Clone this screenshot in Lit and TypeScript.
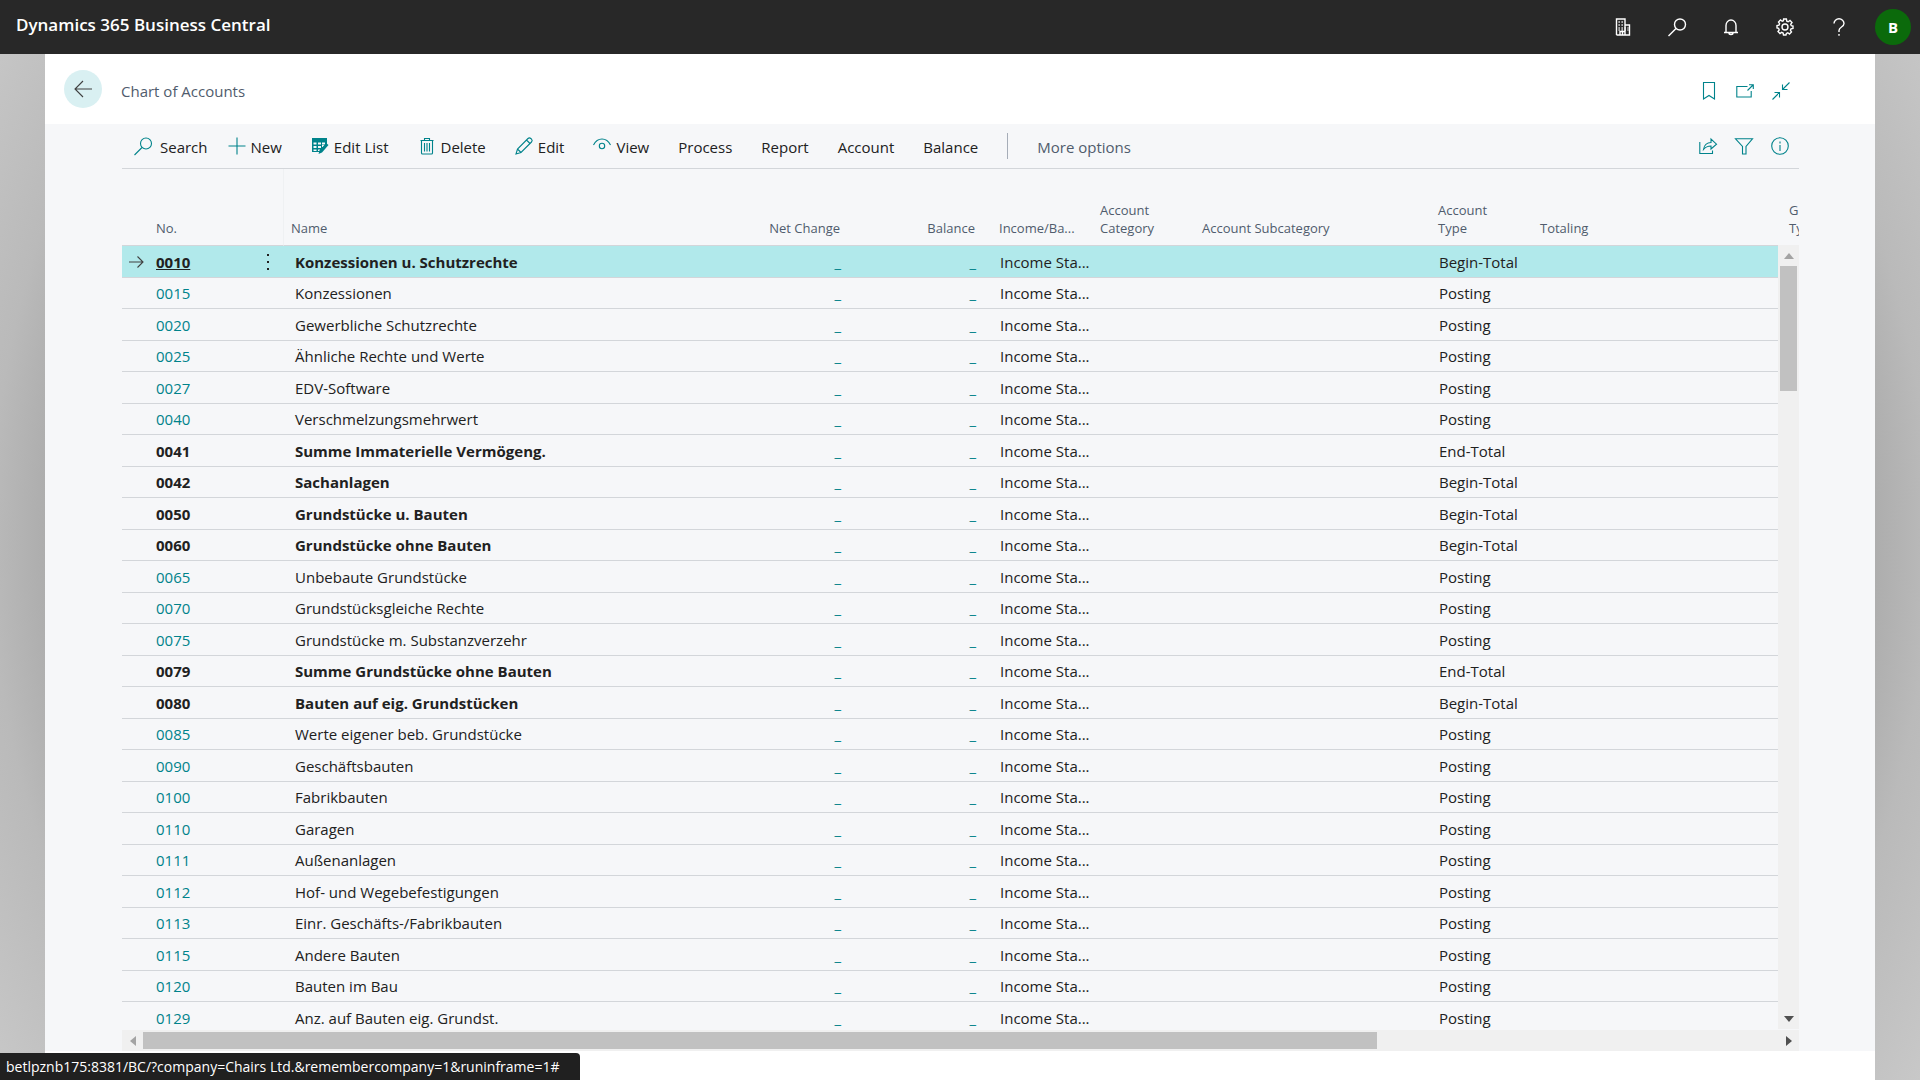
import { LitElement, html, css, svg, nothing } from "lit";
import { customElement } from "lit/decorators.js";
import { classMap } from "lit/directives/class-map.js";

type Row = [string, string, string];

const ROWS: Row[] = [
  ["0010", "Konzessionen u. Schutzrechte", "Begin-Total"],
  ["0015", "Konzessionen", "Posting"],
  ["0020", "Gewerbliche Schutzrechte", "Posting"],
  ["0025", "Ähnliche Rechte und Werte", "Posting"],
  ["0027", "EDV-Software", "Posting"],
  ["0040", "Verschmelzungsmehrwert", "Posting"],
  ["0041", "Summe Immaterielle Vermögeng.", "End-Total"],
  ["0042", "Sachanlagen", "Begin-Total"],
  ["0050", "Grundstücke u. Bauten", "Begin-Total"],
  ["0060", "Grundstücke ohne Bauten", "Begin-Total"],
  ["0065", "Unbebaute Grundstücke", "Posting"],
  ["0070", "Grundstücksgleiche Rechte", "Posting"],
  ["0075", "Grundstücke m. Substanzverzehr", "Posting"],
  ["0079", "Summe Grundstücke ohne Bauten", "End-Total"],
  ["0080", "Bauten auf eig. Grundstücken", "Begin-Total"],
  ["0085", "Werte eigener beb. Grundstücke", "Posting"],
  ["0090", "Geschäftsbauten", "Posting"],
  ["0100", "Fabrikbauten", "Posting"],
  ["0110", "Garagen", "Posting"],
  ["0111", "Außenanlagen", "Posting"],
  ["0112", "Hof- und Wegebefestigungen", "Posting"],
  ["0113", "Einr. Geschäfts-/Fabrikbauten", "Posting"],
  ["0115", "Andere Bauten", "Posting"],
  ["0120", "Bauten im Bau", "Posting"],
  ["0129", "Anz. auf Bauten eig. Grundst.", "Posting"],
];

const ICONS: Record<string, unknown> = {
  search: svg`<circle cx="12" cy="6.500" r="5.500"/><path d="M8 10.500L.5 18"/>`,
  plus: svg`<path d="M9 .5v17M.5 9h17"/>`,
  editList: svg`<path fill="currentColor" stroke="none" fill-rule="evenodd" d="M1 1h15v6l-2 2v-1h-3v2h2l-1 1h-1v2l-2 2H1zM2.500 5.500v2h3v-2zm4.500 0v2h3v-2zm4 0v2h3v-2zm-8.500 3.500v2h3V9zM7 9v2h3V9zm-4.500 3.500v1.500h3v-1.500zm4.500 0v1.500h2v-1.500z"/><path fill="currentColor" stroke="none" d="M15 6l2.500 2-6.500 7.500-3.500 1.500 1-3.500z"/>`,
  trash: svg`<path d="M2.500 3.500h13M6.500 3.500v-2h5v2M3.500 3.500v12.500a1 1 0 0 0 1 1h9a1 1 0 0 0 1-1V3.500M6.500 6v8.500M9 6v8.500M11.500 6v8.500"/>`,
  pencil: svg`<path d="M1 17l1.500-5L13 1.500a2 2 0 0 1 2.800 0l.7.700a2 2 0 0 1 0 2.800L6 15.500zM2.500 12L6 15.500M11.500 3l3.500 3.500"/>`,
  eye: svg`<path d="M.5 8C2.500 4 5.500 2 9 2S15.500 4 17.500 8"/><circle cx="9" cy="9" r="2.700"/>`,
  building: svg`<path d="M2.500 17V1h8.500v16M11 7h4.500v10H2.500M6 17v-3.500h5V17M8.500 14v3"/><path stroke-dasharray="1.300 1.700" d="M4.500 4h6M4.500 7h6M4.500 10h10M4.500 12h10"/>`,
  bell: svg`<path d="M2 14.500h14M4 14.500V7.500a5 5.500 0 0 1 10 0v7M7 15a2 1.500 0 0 0 4 0"/>`,
  gear: svg`<circle cx="9" cy="9" r="3"/><path d="M7.600 1h2.800l.4 2.200 1.400.6L14 2.500l2 2-1.300 1.800.6 1.400L17 8v2.500l-2 .4-.6 1.400L15.500 14l-2 2-1.700-1.200-1.400.6L10 17H7.500l-.4-2-1.500-.6L4 15.500l-2-2 1.200-1.700-.6-1.400L1 10V7.500l2-.4.6-1.400L2.500 4l2-2 1.700 1.200 1.200-.5z"/>`,
  help: svg`<path d="M4 5.500A5 4.700 0 0 1 14 5.500C14 9 9 9 9 12.500V14M9 16v1.800"/>`,
  back: svg`<path d="M18 9H1M9 1L1 9l8 8"/>`,
  row: svg`<path d="M2 9h14M10.500 3.500L16 9l-5.500 5.500"/>`,
  bookmark: svg`<path d="M3.500 .5h11v16.500L9 13.500 3.500 17z"/>`,
  popout: svg`<path d="M11.500 4.500H.8v10.500h14.400V9M11.500 8.500L17 3M13 2.700h4.300V7"/>`,
  collapse: svg`<path d="M17.500 .5L10.500 7.500M10.500 2.500v5h5M.5 17.500L7.500 10.500M2.500 10.500h5v5"/>`,
  share: svg`<path d="M.8 5v11.500h12.700V13.500M4.500 12.500C5 8.500 8 5.500 12 5.500V2L17.500 7.200 12 12V9C9 9 6.500 10 4.500 12.500z"/>`,
  filter: svg`<path d="M.5 1.800h17L11 9.500V17H7.500V9.500z"/>`,
  info: svg`<circle cx="9" cy="9" r="8.300"/><path d="M9 4.500v2M9 8v6"/>`,
};

const icon = (name: string) =>
  html`<svg class="icon" viewBox="0 0 18 18" aria-hidden="true">${ICONS[name]}</svg>`;

const ACTIONS: [string, string][] = [
  ["search", "Search"],
  ["plus", "New"],
  ["editList", "Edit List"],
  ["trash", "Delete"],
  ["pencil", "Edit"],
  ["eye", "View"],
];

const MENUS = ["Process", "Report", "Account", "Balance"];

@customElement("app-root")
export class AppRoot extends LitElement {
  static styles = css`
    :host {
      display: flex;
      flex-direction: column;
      height: 100vh;
      position: relative;
      overflow: hidden;
      font-family: "Open Sans", "Noto Sans", sans-serif;
      font-size: 15px;
      line-height: 20px;
      color: #212121;
      background: radial-gradient(circle farthest-corner, #adadad 83%, #bababa 88%, #c8c8c8 100%);
    }
    * { box-sizing: border-box; }
    button {
      font: inherit;
      color: inherit;
      background: none;
      border: 0;
      padding: 0;
      display: flex;
      align-items: center;
      white-space: nowrap;
    }
    a { color: inherit; text-decoration: none; }
    .icon {
      width: 18px;
      height: 18px;
      flex: none;
      fill: none;
      stroke: currentColor;
      stroke-width: 1.1;
      overflow: visible;
      display: block;
    }
    .topbar {
      flex: none;
      display: flex;
      align-items: center;
      justify-content: space-between;
      height: 54px;
      padding: 0 9px 0 16px;
      background: #282828;
      color: #fff;
    }
    .brand { font-size: 17px; font-weight: 600; padding-bottom: 4px; }
    .tools { display: flex; align-items: center; gap: 36px; }
    .tools .icon { stroke-width: 1.4; }
    .avatar {
      width: 36px;
      height: 36px;
      margin-left: -9px;
      border-radius: 50%;
      justify-content: center;
      background: #0b6a0b;
      font-size: 15px;
      font-weight: 700;
    }
    .panel {
      flex: 1;
      min-height: 0;
      margin: 0 45px;
      padding-bottom: 29px;
      background: #fff;
      display: flex;
      flex-direction: column;
    }
    .title {
      flex: none;
      display: flex;
      align-items: center;
      height: 70px;
      padding: 0 85px 0 19px;
    }
    .back {
      width: 38px;
      height: 38px;
      border-radius: 50%;
      background: #d9f0f2;
      color: #404040;
      justify-content: center;
    }
    h1 {
      margin: 0 auto 0 19px;
      padding-top: 4px;
      font-size: 15px;
      font-weight: 400;
      color: #505c6d;
    }
    .group { display: flex; gap: 18px; color: #00838b; }
    .title .group { padding-top: 3px; }
    .content {
      flex: 1;
      min-height: 0;
      display: flex;
      flex-direction: column;
      padding: 0 76px 0 77px;
      background: #f6f7f9;
    }
    .bar {
      flex: none;
      display: flex;
      align-items: center;
      height: 45px;
      padding: 0 10px 0 12px;
      border-bottom: 1px solid #d3d6da;
    }
    .actions { display: flex; gap: 29px; margin-right: auto; align-items: center; }
    .actions .icon { color: #00838b; }
    .action { gap: 5px; }
    .action.search { gap: 8px; margin-right: -9px; }
    .label { padding-top: 2px; }
    .sep { width: 1px; height: 26px; background: #a6adb8; }
    .more { color: #505c6d; }
    .list {
      flex: 1;
      min-height: 0;
      position: relative;
      overflow: hidden;
    }
    table {
      width: 100%;
      table-layout: fixed;
      border-collapse: separate;
      border-spacing: 0;
    }
    th, td { padding: 0; text-align: left; white-space: nowrap; overflow: hidden; }
    th {
      height: 77px;
      padding: 0 7px 8px;
      vertical-align: bottom;
      font-size: 13px;
      line-height: 18px;
      font-weight: 400;
      color: #505c6d;
      border-bottom: 1px solid #d3d6da;
    }
    .wrap { white-space: normal; }
    td {
      height: 31px;
      padding: 0 8px;
      line-height: 20px;
      border-bottom: 1px solid #d3d6da;
    }
    tr:nth-child(odd) td { height: 32px; }
    .mark { width: 27px; }
    .no { width: 102px; }
    .dots { width: 33px; }
    .name { width: 427px; }
    .net { width: 135px; }
    .bal { width: 135px; }
    .inc { width: 112px; }
    .cat { width: 102px; }
    .sub { width: 236px; }
    .type { width: 102px; }
    .rest { width: 17px; }
    th.net, th.bal { text-align: right; padding-right: 6px; }
    .rule { border-right: 1px solid #eff1f3; }
    td.no { padding-left: 7px; }
    td.mark { padding-left: 5px; color: #404040; }
    td.name { padding-left: 11px; }
    td.num { text-align: right; padding-right: 5px; color: #00838b; }
    td.no { color: #00838b; }
    th.inc { padding-left: 18px; padding-right: 0; }
    td.inc { padding-left: 19px; padding-right: 0; }
    .bold td.no, .bold td.name { color: #212121; font-weight: 700; }
    .current td { background: #b1e9eb; }
    .current td.no a { text-decoration: underline; }
    th.rest { padding-right: 0; }
    .kebab { width: 100%; height: 20px; justify-content: center; }
    .kebab .icon { fill: currentColor; stroke: none; }
    .vscroll {
      position: absolute;
      right: 0;
      top: 76px;
      bottom: 1px;
      width: 21px;
      padding: 0 2px;
      background: #f0f0f0;
      display: flex;
      flex-direction: column;
    }
    .hscroll {
      flex: none;
      height: 21px;
      padding: 2px 0;
      background: #f0f0f0;
      display: flex;
    }
    .cap { flex: none; width: 21px; display: flex; align-items: center; justify-content: center; }
    .vscroll .cap { width: auto; height: 21px; }
    .cap svg { width: 10px; height: 10px; fill: #505050; }
    .cap.off svg { fill: #a3a3a3; }
    .vthumb { height: 125px; background: #c1c1c1; margin-bottom: auto; }
    .track { flex: 1; }
    .hthumb { width: 75.500%; height: 100%; background: #c1c1c1; }
    .status {
      position: absolute;
      left: 0;
      bottom: 0;
      height: 27px;
      padding: 4px 20px 0 6px;
      border-radius: 0 4px 0 0;
      background: #202020;
      color: #fff;
      font-size: 14px;
      white-space: nowrap;
    }
  `;

  private row([no, name, type]: Row, i: number) {
    const bold = type !== "Posting";
    return html`<tr class=${classMap({ bold, current: i === 0 })}>
      <td class="mark">${i === 0 ? icon("row") : nothing}</td>
      <td class="no"><a href="#">${no}</a></td>
      <td class="dots">${i === 0
        ? html`<button class="kebab" aria-label="Row menu"><svg class="icon" viewBox="0 0 18 18"><path d="M8 1h2v2H8zM8 8h2v2H8zM8 15h2v2H8z"/></svg></button>`
        : nothing}</td>
      <td class="name">${name}</td>
      <td class="num"><a href="#">_</a></td>
      <td class="num"><a href="#">_</a></td>
      <td class="inc">Income Sta...</td>
      <td></td>
      <td></td>
      <td>${type}</td>
      <td></td>
      <td></td>
    </tr>`;
  }

  render() {
    return html`
      <header class="topbar">
        <div class="brand">Dynamics 365 Business Central</div>
        <div class="tools">
          ${["building", "search", "bell", "gear", "help"].map(
            (n) => html`<button aria-label=${n}>${icon(n)}</button>`
          )}
          <button class="avatar">B</button>
        </div>
      </header>
      <main class="panel">
        <div class="title">
          <button class="back" aria-label="Back">${icon("back")}</button>
          <h1>Chart of Accounts</h1>
          <div class="group">
            ${["bookmark", "popout", "collapse"].map(
              (n) => html`<button aria-label=${n}>${icon(n)}</button>`
            )}
          </div>
        </div>
        <section class="content">
          <div class="bar">
            <div class="actions">
              ${ACTIONS.map(
                ([ic, label]) =>
                  html`<button class="action ${ic}">${icon(ic)}<span class="label">${label}</span></button>`
              )}
              ${MENUS.map((label) => html`<button class="label">${label}</button>`)}
              <span class="sep"></span>
              <button class="label more">More options</button>
            </div>
            <div class="group">
              ${["share", "filter", "info"].map(
                (n) => html`<button aria-label=${n}>${icon(n)}</button>`
              )}
            </div>
          </div>
          <div class="list">
            <table>
              <thead>
                <tr>
                  <th class="mark"></th>
                  <th class="no">No.</th>
                  <th class="dots rule"></th>
                  <th class="name">Name</th>
                  <th class="net">Net Change</th>
                  <th class="bal">Balance</th>
                  <th class="inc">Income/Ba...</th>
                  <th class="cat wrap">Account Category</th>
                  <th class="sub">Account Subcategory</th>
                  <th class="type wrap">Account<br />Type</th>
                  <th>Totaling</th>
                  <th class="rest">G<br />Ty</th>
                </tr>
              </thead>
              <tbody>${ROWS.map((r, i) => this.row(r, i))}</tbody>
            </table>
            <div class="vscroll">
              <span class="cap off"><svg viewBox="0 0 10 10"><path d="M0 8h10L5 2z"/></svg></span>
              <span class="vthumb"></span>
              <span class="cap"><svg viewBox="0 0 10 10"><path d="M0 2h10L5 8z"/></svg></span>
            </div>
          </div>
          <div class="hscroll">
            <span class="cap off"><svg viewBox="0 0 10 10"><path d="M8 0v10L2 5z"/></svg></span>
            <div class="track"><div class="hthumb"></div></div>
            <span class="cap"><svg viewBox="0 0 10 10"><path d="M2 0v10l6-5z"/></svg></span>
          </div>
        </section>
      </main>
      <div class="status">betlpznb175:8381/BC/?company=Chairs Ltd.&amp;remembercompany=1&amp;runinframe=1#</div>
    `;
  }
}
